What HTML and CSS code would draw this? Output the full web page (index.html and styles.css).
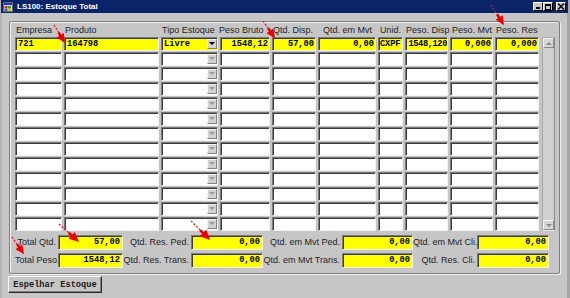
FILE: index.html
```html
<!DOCTYPE html>
<html lang="pt">
<head>
<meta charset="utf-8">
<title>LS100: Estoque Total</title>
<link rel="stylesheet" href="styles.css">
</head>
<body>
<div class="window">
  <div class="titlebar">
    <svg class="appicon" width="10" height="10" viewBox="0 0 10 10">
      <rect x="0" y="0" width="10" height="10" fill="#d8d8d8"/>
      <rect x="0.5" y="0.5" width="9" height="9" fill="none" stroke="#6a6a6a"/>
      <rect x="1" y="1" width="8" height="2" fill="#1838c8"/>
      <rect x="1.5" y="4" width="3" height="2.5" fill="#e02020"/>
      <rect x="5" y="4" width="3" height="2.5" fill="#20a040"/>
      <rect x="1.5" y="7" width="3" height="2" fill="#2060e0"/>
      <rect x="5" y="7" width="3" height="2" fill="#e0c020"/>
    </svg>
    <span class="title">LS100: Estoque Total</span>
    <div class="wbtns">
      <div class="wbtn"><span class="g-min"></span></div>
      <div class="wbtn"><span class="g-max"></span></div>
      <div class="wbtn close">
        <svg width="8" height="7" viewBox="0 0 8 7"><path d="M1 0.5 L7 6.5 M7 0.5 L1 6.5" stroke="#000" stroke-width="1.4"/></svg>
      </div>
    </div>
  </div>

  <div class="frame">
    <div class="tablewrap">
      <div class="grid">
        <div class="h">Empresa</div>
        <div class="h">Produto</div>
        <div class="h">Tipo Estoque</div>
        <div class="h h-left">Peso Bruto</div>
        <div class="h">Qtd. Disp.</div>
        <div class="h h-right5">Qtd. em Mvt</div>
        <div class="h h-right2">Unid.</div>
        <div class="h">Peso. Disp</div>
        <div class="h h-right2">Peso. Mvt</div>
        <div class="h">Peso. Res</div>

        <div class="c y">721</div><div class="c y">164798</div><div class="c y combo"><span class="ct">Livre</span><span class="dd on"></span></div><div class="c y r">1548,12</div><div class="c y r">57,00</div><div class="c y r">0,00</div><div class="c y tight">CXPF</div><div class="c y r tight xtight">1548,120</div><div class="c y r">0,000</div><div class="c y r">0,000</div>

        <div class="c"></div><div class="c"></div><div class="c combo"><span class="ct"></span><span class="dd"></span></div><div class="c"></div><div class="c"></div><div class="c"></div><div class="c"></div><div class="c"></div><div class="c"></div><div class="c"></div>
        <div class="c"></div><div class="c"></div><div class="c combo"><span class="ct"></span><span class="dd"></span></div><div class="c"></div><div class="c"></div><div class="c"></div><div class="c"></div><div class="c"></div><div class="c"></div><div class="c"></div>
        <div class="c"></div><div class="c"></div><div class="c combo"><span class="ct"></span><span class="dd"></span></div><div class="c"></div><div class="c"></div><div class="c"></div><div class="c"></div><div class="c"></div><div class="c"></div><div class="c"></div>
        <div class="c"></div><div class="c"></div><div class="c combo"><span class="ct"></span><span class="dd"></span></div><div class="c"></div><div class="c"></div><div class="c"></div><div class="c"></div><div class="c"></div><div class="c"></div><div class="c"></div>
        <div class="c"></div><div class="c"></div><div class="c combo"><span class="ct"></span><span class="dd"></span></div><div class="c"></div><div class="c"></div><div class="c"></div><div class="c"></div><div class="c"></div><div class="c"></div><div class="c"></div>
        <div class="c"></div><div class="c"></div><div class="c combo"><span class="ct"></span><span class="dd"></span></div><div class="c"></div><div class="c"></div><div class="c"></div><div class="c"></div><div class="c"></div><div class="c"></div><div class="c"></div>
        <div class="c"></div><div class="c"></div><div class="c combo"><span class="ct"></span><span class="dd"></span></div><div class="c"></div><div class="c"></div><div class="c"></div><div class="c"></div><div class="c"></div><div class="c"></div><div class="c"></div>
        <div class="c"></div><div class="c"></div><div class="c combo"><span class="ct"></span><span class="dd"></span></div><div class="c"></div><div class="c"></div><div class="c"></div><div class="c"></div><div class="c"></div><div class="c"></div><div class="c"></div>
        <div class="c"></div><div class="c"></div><div class="c combo"><span class="ct"></span><span class="dd"></span></div><div class="c"></div><div class="c"></div><div class="c"></div><div class="c"></div><div class="c"></div><div class="c"></div><div class="c"></div>
        <div class="c"></div><div class="c"></div><div class="c combo"><span class="ct"></span><span class="dd"></span></div><div class="c"></div><div class="c"></div><div class="c"></div><div class="c"></div><div class="c"></div><div class="c"></div><div class="c"></div>
        <div class="c"></div><div class="c"></div><div class="c combo"><span class="ct"></span><span class="dd"></span></div><div class="c"></div><div class="c"></div><div class="c"></div><div class="c"></div><div class="c"></div><div class="c"></div><div class="c"></div>
        <div class="c"></div><div class="c"></div><div class="c combo"><span class="ct"></span><span class="dd"></span></div><div class="c"></div><div class="c"></div><div class="c"></div><div class="c"></div><div class="c"></div><div class="c"></div><div class="c"></div>
      </div>
      <div class="scrollbar">
        <div class="sbtn"><span class="tri-up"></span></div>
        <div class="sbtn"><span class="tri-down"></span></div>
      </div>
    </div>

    <div class="totals">
      <div class="lbl">Total Qtd.</div><div class="fld">57,00</div>
      <div class="lbl">Qtd. Res. Ped.</div><div class="fld">0,00</div>
      <div class="lbl">Qtd. em Mvt Ped.</div><div class="fld">0,00</div>
      <div class="lbl">Qtd. em Mvt Cli.</div><div class="fld">0,00</div>
      <div class="lbl">Total Peso.</div><div class="fld">1548,12</div>
      <div class="lbl">Qtd. Res. Trans.</div><div class="fld">0,00</div>
      <div class="lbl">Qtd. em Mvt Trans.</div><div class="fld">0,00</div>
      <div class="lbl">Qtd. Res. Cli.</div><div class="fld">0,00</div>
    </div>
  </div>

  <div class="actions">
    <button class="btn" type="button">Espelhar Estoque</button>
  </div>
</div>

<svg class="arrows" width="570" height="298" viewBox="0 0 570 298">
  <g transform="translate(54 25) rotate(58.6)">
    <line x1="0" y1="0" x2="9" y2="0" class="dash"/>
    <line x1="9" y1="0" x2="14" y2="0" class="shaft"/>
    <polygon points="21,0 12,-4.2 12,4.2" class="head"/>
  </g>
  <g transform="translate(263 21) rotate(54.8)">
    <line x1="0" y1="0" x2="9" y2="0" class="dash"/>
    <line x1="9" y1="0" x2="14" y2="0" class="shaft"/>
    <polygon points="21,0 12,-4.2 12,4.2" class="head"/>
  </g>
  <g transform="translate(491 5) rotate(57)">
    <line x1="0" y1="0" x2="11" y2="0" class="dash"/>
    <line x1="11" y1="0" x2="17" y2="0" class="shaft"/>
    <polygon points="24,0 15,-4.2 15,4.2" class="head"/>
  </g>
  <g transform="translate(59 224) rotate(42)">
    <line x1="0" y1="0" x2="13" y2="0" class="dash"/>
    <line x1="13" y1="0" x2="19" y2="0" class="shaft"/>
    <polygon points="27,0 17,-4.6 17,4.6" class="head"/>
  </g>
  <g transform="translate(12 237) rotate(54.8)">
    <line x1="0" y1="0" x2="9" y2="0" class="dash"/>
    <line x1="9" y1="0" x2="14" y2="0" class="shaft"/>
    <polygon points="21,0 12,-4.2 12,4.2" class="head"/>
  </g>
  <g transform="translate(191 221) rotate(45)">
    <line x1="0" y1="0" x2="13" y2="0" class="dash"/>
    <line x1="13" y1="0" x2="19" y2="0" class="shaft"/>
    <polygon points="27,0 17,-4.6 17,4.6" class="head"/>
  </g>
</svg>
</body>
</html>
```

FILE: styles.css
```css
* { box-sizing: border-box; }

html, body {
  margin: 0;
  padding: 0;
}

body {
  width: 570px;
  height: 298px;
  overflow: hidden;
  position: relative;
  background: #c6c6c6;
  font-family: "Liberation Sans", Arial, sans-serif;
}

.window {
  width: 570px;
  height: 298px;
  background: #c6c6c6;
  display: flex;
  flex-direction: column;
  box-shadow: inset 2px 0 0 #b2b2b2, inset -3px 0 0 #a6a6a6;
}

/* ---------- title bar ---------- */
.titlebar {
  height: 13px;
  margin: 0 2px 0 1px;
  background: #0a246a;
  display: flex;
  align-items: center;
  padding-left: 2px;
}

.appicon {
  flex: none;
  display: block;
}

.title {
  margin-left: 4px;
  color: #fff;
  font-weight: bold;
  font-size: 8px;
  line-height: 13px;
  white-space: nowrap;
}

.wbtns {
  margin-left: auto;
  display: flex;
  align-items: center;
  padding-right: 2px;
}

.wbtn {
  width: 10px;
  height: 9px;
  background: #c6c6c6;
  border: 1px solid;
  border-color: #fff #000 #000 #fff;
  position: relative;
  display: flex;
  align-items: center;
  justify-content: center;
}

.wbtn.close {
  margin-left: 3px;
}

.g-min {
  position: absolute;
  left: 2px;
  bottom: 1px;
  width: 4px;
  height: 2px;
  background: #000;
}

.g-max {
  width: 6px;
  height: 6px;
  border: 1px solid #000;
  border-top-width: 2px;
}

/* ---------- frame ---------- */
.frame {
  margin: 8px 10px 0 9px;
  border: 1px solid #808080;
  border-radius: 2px;
  box-shadow: inset 1px 1px 0 #f0f0f0, 1px 1px 0 #f0f0f0;
  padding: 2px 4px 5px 5px;
}

.tablewrap {
  display: flex;
  gap: 3px;
}

.grid {
  display: grid;
  grid-template-columns: 47px 95px 57px 50px 44px 58px 25px 43px 43px 44px;
  grid-template-rows: 12px repeat(13, 14px);
  column-gap: 2px;
  row-gap: 1px;
  width: 524px;
}

.h {
  font-size: 9px;
  line-height: 12px;
  color: #1e1e1e;
  white-space: nowrap;
  padding-left: 1px;
}

.h-left { margin-left: -2px; }
.h-right5 { padding-left: 5px; }
.h-right2 { padding-left: 2px; }

.c {
  background: #fff;
  border: 1px solid;
  border-color: #7a7a7a #f2f2f2 #f2f2f2 #7a7a7a;
  box-shadow: inset 1px 1px 0 #3c3c3c;
  font-family: "Liberation Mono", "Courier New", monospace;
  font-weight: bold;
  font-size: 8.7px;
  line-height: 12px;
  color: #000;
  padding: 0 1px 0 2px;
  white-space: nowrap;
  overflow: hidden;
}

.c.y { background: #ffff00; }
.c.r { text-align: right; }
.c.tight {
  padding: 0 0 0 1px;
  letter-spacing: -0.15px;
}
.c.xtight {
  letter-spacing: -0.4px;
}

.combo {
  display: flex;
  align-items: center;
  padding-right: 0;
}

.ct {
  flex: 1;
}

.dd {
  flex: none;
  width: 10px;
  height: 10px;
  background: #d2d2d2;
  border: 1px solid;
  border-color: #f4f4f4 #808080 #808080 #f4f4f4;
  position: relative;
}

.dd::after {
  content: "";
  position: absolute;
  left: 1px;
  top: 2px;
  border-left: 3px solid transparent;
  border-right: 3px solid transparent;
  border-top: 3px solid #9a9a9a;
}

.dd.on::after {
  border-top-color: #000;
}

/* ---------- scrollbar ---------- */
.scrollbar {
  width: 13px;
  height: 194px;
  margin-top: 13px;
  background: #d0d0d0;
  border: 1px solid;
  border-color: #a8a8a8 #8c8c8c #e8e8e8 #a8a8a8;
  display: flex;
  flex-direction: column;
  justify-content: space-between;
}

.sbtn {
  height: 10px;
  background: #d6d6d6;
  border: 1px solid;
  border-color: #f4f4f4 #8a8a8a #8a8a8a #f4f4f4;
  display: flex;
  align-items: center;
  justify-content: center;
}

.tri-up {
  border-left: 3px solid transparent;
  border-right: 3px solid transparent;
  border-bottom: 3px solid #8a8a8a;
}

.tri-down {
  border-left: 3px solid transparent;
  border-right: 3px solid transparent;
  border-top: 3px solid #8a8a8a;
}

/* ---------- totals ---------- */
.totals {
  margin-top: 4px;
  display: grid;
  grid-template-columns: 43px 65px 68px 72px 79px 71px 64px 72px;
  grid-template-rows: 15px 15px;
  row-gap: 3px;
}

.lbl {
  font-size: 9px;
  line-height: 15px;
  color: #1e1e1e;
  text-align: right;
  padding-right: 2px;
  white-space: nowrap;
}

.fld {
  background: #ffff00;
  border: 1px solid;
  border-color: #7a7a7a #f2f2f2 #f2f2f2 #7a7a7a;
  box-shadow: inset 1px 1px 0 #3c3c3c;
  font-family: "Liberation Mono", "Courier New", monospace;
  font-weight: bold;
  font-size: 8.7px;
  line-height: 13px;
  color: #000;
  text-align: right;
  padding-right: 2px;
  white-space: nowrap;
}

/* ---------- bottom button ---------- */
.actions {
  margin: 2px 0 0 8px;
  display: flex;
}

.btn {
  width: 94px;
  height: 17px;
  margin: 0;
  padding: 0;
  background: #c6c6c6;
  border: 1px solid;
  border-color: #fff #2a2a2a #2a2a2a #fff;
  box-shadow: inset -1px -1px 0 #808080;
  font-family: "Liberation Mono", "Courier New", monospace;
  font-weight: bold;
  font-size: 8.7px;
  line-height: 14px;
  color: #1a1a1a;
  text-align: center;
}

/* ---------- annotation arrows overlay ---------- */
.arrows {
  position: absolute;
  left: 0;
  top: 0;
  pointer-events: none;
}

.arrows .dash {
  stroke: #ff1010;
  stroke-width: 1.3;
  stroke-dasharray: 2 1.6;
}

.arrows .shaft {
  stroke: #ee0000;
  stroke-width: 2.6;
}

.arrows .head {
  fill: #ee0000;
}
```
